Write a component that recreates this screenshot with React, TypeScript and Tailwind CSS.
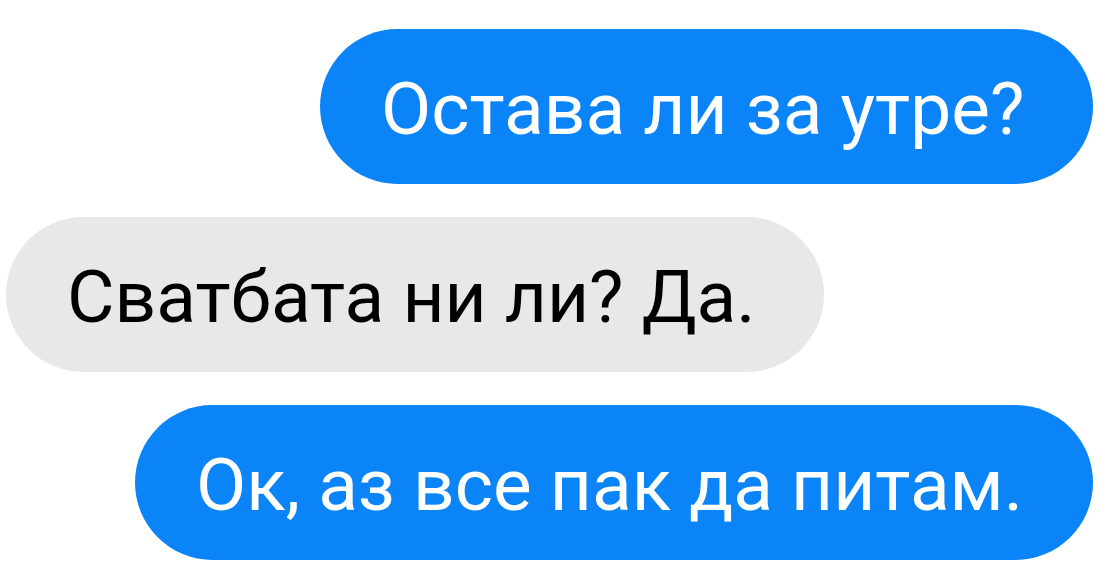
import React from 'react';

type Message = {
  text: string;
  mine: boolean;
  width: string;
};

const messages: Message[] = [
  { text: 'Остава ли за утре?', mine: true, width: 'w-[773px]' },
  { text: 'Сватбата ни ли? Да.', mine: false, width: 'w-[818px]' },
  { text: 'Ок, аз все пак да питам.', mine: true, width: 'w-[958px]' },
];

const Bubble: React.FC<{ message: Message }> = ({ message }) => {
  return (
    <div className={`flex ${message.mine ? 'justify-end' : 'justify-start'}`}>
      <div
        className={`${message.width} h-[155px] rounded-full flex items-center pl-[61px] pt-[6px] whitespace-nowrap ${
          message.mine ? 'bg-[#0a84f6] text-white' : 'bg-[#e8e8e8] text-black'
        }`}
      >
        <span className="text-[73px] leading-none font-normal">{message.text}</span>
      </div>
    </div>
  );
};

export default function App() {
  return (
    <div
      className="w-[1108px] h-[580px] bg-white overflow-hidden flex flex-col gap-[33px] pt-[29px] pl-[6px] pr-[15px]"
      style={{ fontFamily: 'Roboto, "Noto Sans", sans-serif' }}
    >
      {messages.map((m, i) => (
        <Bubble key={i} message={m} />
      ))}
    </div>
  );
}
